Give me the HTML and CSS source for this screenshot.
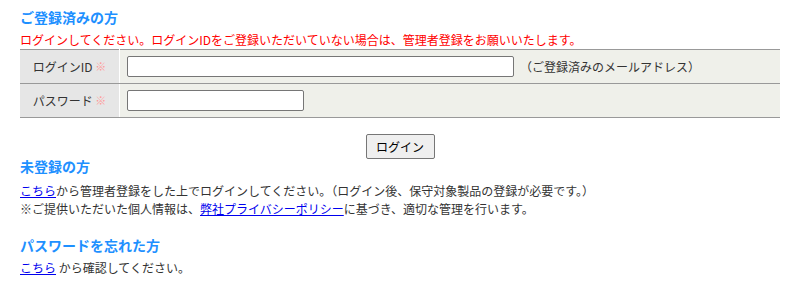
FILE: index.html
```html
<!DOCTYPE html>
<html lang="ja">
<head>
    <meta charset="UTF-8">
    <title>ログイン</title>
    <link rel="stylesheet" href="styles.css">
</head>
<body>
    <div id="container">
        <h2 class="ttl">ご登録済みの方</h2>
        <p class="attention">ログインしてください。ログインIDをご登録いただいていない場合は、管理者登録をお願いいたします。</p>
        <table class="login">
            <tr>
                <th>ログインID <span class="req">※</span></th>
                <td><input type="text" class="mail"><span class="note">（ご登録済みのメールアドレス）</span></td>
            </tr>
            <tr>
                <th>パスワード <span class="req">※</span></th>
                <td><input type="password" class="pass"></td>
            </tr>
        </table>
        <div class="btn">
            <button type="button">ログイン</button>
        </div>
        <h2 class="ttl">未登録の方</h2>
        <p class="txt"><a href="#">こちら</a>から管理者登録をした上でログインしてください。（ログイン後、保守対象製品の登録が必要です。）<br>※ご提供いただいた個人情報は、<a href="#">弊社プライバシーポリシー</a>に基づき、適切な管理を行います。</p>
        <h2 class="ttl forget">パスワードを忘れた方</h2>
        <p class="txt last"><a href="#">こちら</a> から確認してください。</p>
    </div>
</body>
</html>
```

FILE: styles.css
```css
*{
    margin: 0;
    padding: 0;
}
body{
    font-family: "Noto Sans CJK JP", "Noto Sans", sans-serif;
    font-size: 12px;
    color: #333;
}
#container{
    padding: 10px 20px 0;
}
.ttl{
    font-size: 14px;
    line-height: 14px;
    color: #1e90ff;
}
.attention{
    color: #ff0000;
    line-height: 18px;
    margin-top: 7px;
}
.login{
    width: 760px;
    border-collapse: collapse;
}
.login th,.login td{
    border-top: 1px solid #999;
    border-bottom: 1px solid #999;
    height: 33px;
    text-align: left;
    font-weight: normal;
}
.login th{
    width: 99px;
    background: #e6e6e6;
    border-right: 1px solid #fff;
    text-align: center;
    padding: 0;
}
.login td{
    background: #eff0ea;
    padding: 0 7px;
}
.req{
    color: #ff9a9a;
    font-size: 11px;
    vertical-align: top;
}
input{
    box-sizing: border-box;
    border: 1px solid #767676;
    border-radius: 2px;
    height: 21px;
    padding: 1px 2px;
    vertical-align: middle;
    font-size: 12px;
}
.mail{
    width: 387px;
}
.pass{
    width: 177px;
}
.note{
    margin-left: 6px;
    vertical-align: middle;
}
.btn{
    display: flex;
    justify-content: center;
    margin-top: 16px;
}
button{
    font-family: inherit;
    font-size: 12px;
    width: 69px;
    height: 25px;
    color: #000;
    background: #efefef;
    border: 1px solid #767676;
    border-radius: 2px;
}
.txt{
    line-height: 18px;
    margin-top: 9px;
}
.txt a{
    color: #0000ee;
}
.forget{
    margin-top: 20px;
}
.last{
    margin-top: 7px;
}
```
